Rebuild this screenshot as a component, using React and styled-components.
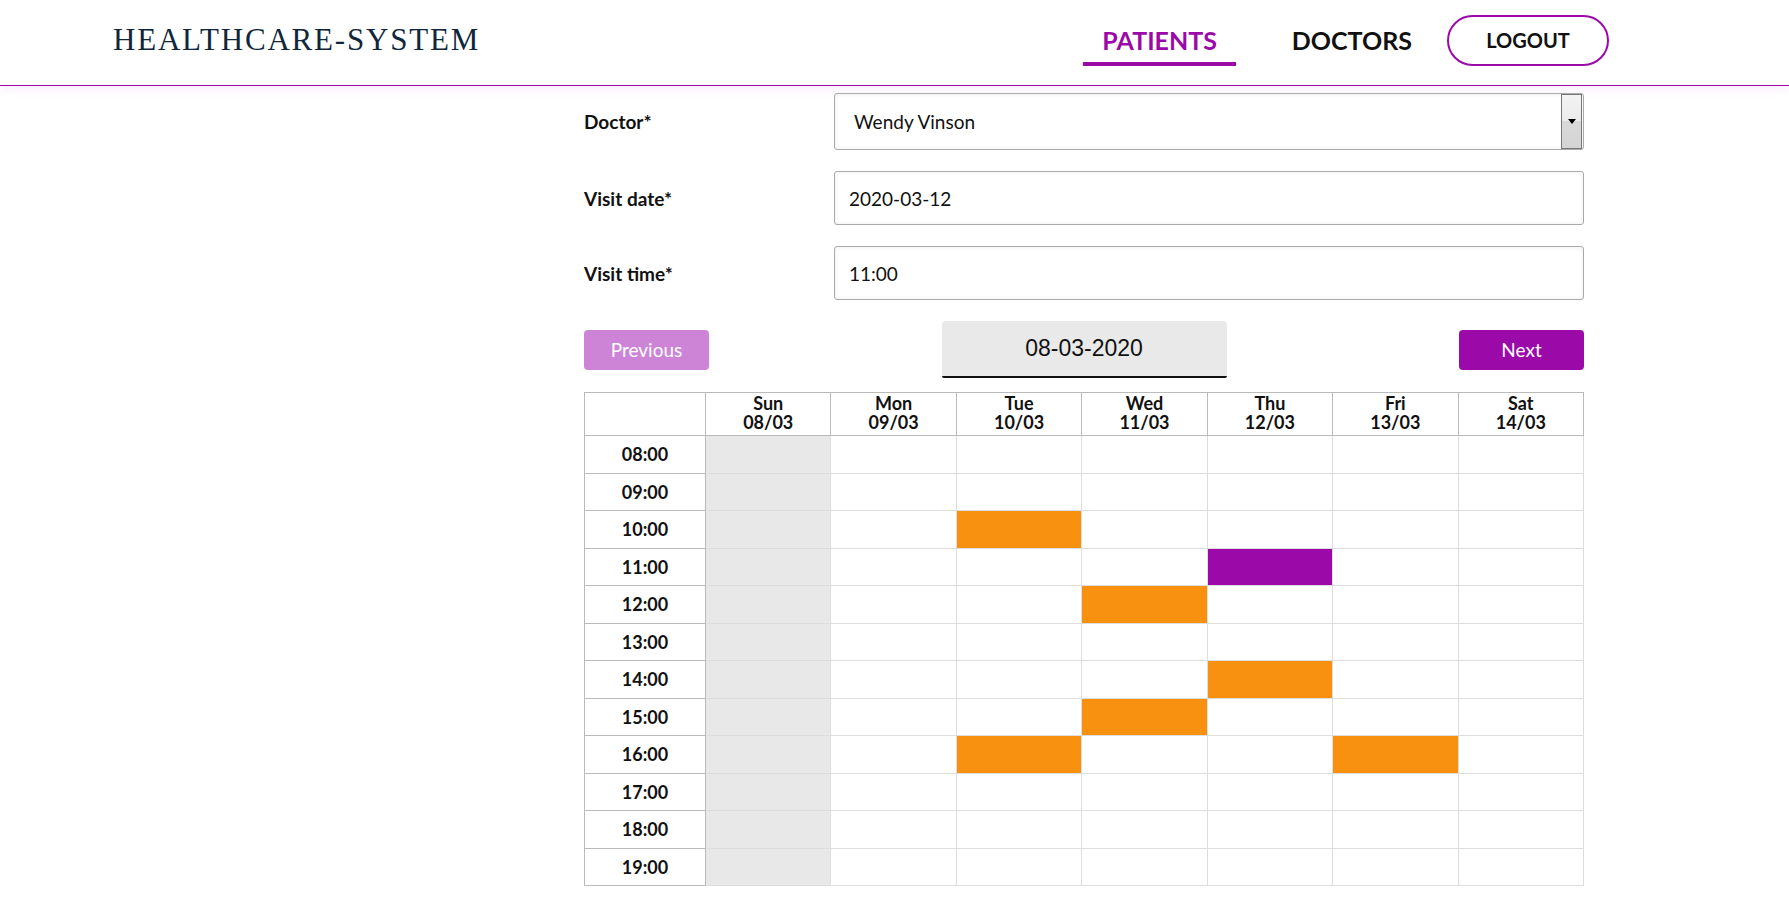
import React from 'react';
import styled, { createGlobalStyle } from 'styled-components';

const PURPLE = '#9b09a8';
const ORANGE = '#f8910f';

const GlobalStyle = createGlobalStyle`
  body {
    margin: 0;
    background: #fff;
    font-family: Lato, "Open Sans", sans-serif;
    color: #111;
  }
`;

const Header = styled.header`
  height: 86px;
  box-sizing: border-box;
  display: flex;
  align-items: center;
  justify-content: space-between;
  padding: 0 180px 5px 113px;
  border-bottom: 1px solid ${PURPLE};
  box-shadow: 0 3px 10px rgba(155, 9, 168, 0.08);
`;

const Logo = styled.div`
  font-family: "Liberation Serif", "DejaVu Serif", serif;
  font-size: 31px;
  letter-spacing: 1.8px;
  color: #10263a;
`;

const Nav = styled.nav`
  display: flex;
  align-items: center;
`;

const NavLinks = styled.div`
  display: flex;
  gap: 37px;
  align-items: center;
`;

const NavLink = styled.a`
  font-size: 25px;
  font-weight: 700;
  line-height: 28px;
  padding: 12px 19px 8px;
  color: ${p => (p.$active ? PURPLE : '#111')};
  border-bottom: 4px solid ${p => (p.$active ? PURPLE : 'transparent')};
  cursor: pointer;
`;

const LogoutButton = styled.button`
  margin-left: 16px;
  width: 162px;
  height: 51px;
  border: 2px solid ${PURPLE};
  border-radius: 26px;
  background: #fff;
  font-family: Lato, sans-serif;
  font-size: 20px;
  font-weight: 700;
  color: #111;
  padding: 0;
`;

const Content = styled.main`
  width: 1000px;
  margin: 7px 0 0 584px;
`;

const FormRow = styled.div`
  display: grid;
  grid-template-columns: 250px 1fr;
  align-items: center;
  margin-bottom: 21px;
`;

const Label = styled.label`
  font-size: 19px;
  font-weight: 700;
`;

const Input = styled.div`
  height: 54px;
  box-sizing: border-box;
  border: 1px solid #aaa;
  border-radius: 3px;
  box-shadow: inset 0 0 5px rgba(0, 0, 0, 0.07);
  display: flex;
  align-items: center;
  padding-left: 14px;
  font-size: 19px;
`;

const Select = styled(Input)`
  height: 57px;
  padding-left: 19px;
  padding-right: 1px;
  justify-content: space-between;
`;

const SelectArrow = styled.div`
  width: 21px;
  height: 55px;
  box-sizing: border-box;
  border: 1px solid #777;
  background: linear-gradient(#f3f3f3 0%, #ebebeb 50%, #d9d9d9 50%, #d4d4d4 100%);
  display: flex;
  align-items: center;
  justify-content: center;
  &::after {
    content: '';
    border-left: 4px solid transparent;
    border-right: 4px solid transparent;
    border-top: 5px solid #000;
  }
`;

const WeekBar = styled.div`
  display: flex;
  align-items: center;
  justify-content: space-between;
`;

const PageButton = styled.button`
  width: 125px;
  height: 40px;
  border: none;
  border-radius: 4px;
  background: ${p => (p.$disabled ? '#ce84d6' : PURPLE)};
  color: #fff;
  font-family: Lato, sans-serif;
  font-size: 19px;
  padding: 0;
`;

const DateBox = styled.div`
  width: 285px;
  height: 57px;
  box-sizing: border-box;
  background: #e9e9e9;
  border-bottom: 2px solid #111;
  border-radius: 4px 4px 2px 2px;
  display: flex;
  align-items: center;
  justify-content: center;
  font-family: "Liberation Sans", Arial, sans-serif;
  font-size: 23px;
  color: #111;
`;

const Table = styled.table`
  margin-top: 14px;
  width: 1000px;
  border-collapse: collapse;
  table-layout: fixed;
  border: 1px solid #bbb;
`;

const HeadCell = styled.th`
  height: 40px;
  border: 1px solid #bbb;
  font-size: 18px;
  font-weight: 700;
  line-height: 19px;
  padding: 0 0 2px;
  vertical-align: middle;
`;

const TimeCell = styled.td`
  height: 37.5px;
  box-sizing: border-box;
  border: 1px solid #bbb;
  font-size: 18px;
  font-weight: 700;
  text-align: center;
  padding: 0;
`;

const SlotCell = styled.td`
  border: 1px solid #ddd;
  padding: 0;
  background: ${p => p.$color};
`;

const days = [
  ['Sun', '08/03'],
  ['Mon', '09/03'],
  ['Tue', '10/03'],
  ['Wed', '11/03'],
  ['Thu', '12/03'],
  ['Fri', '13/03'],
  ['Sat', '14/03'],
];

const hours = ['08:00', '09:00', '10:00', '11:00', '12:00', '13:00', '14:00', '15:00', '16:00', '17:00', '18:00', '19:00'];

// taken visits by "day-hour", selected one in purple
const taken = {
  '2-10:00': ORANGE,
  '4-11:00': PURPLE,
  '3-12:00': ORANGE,
  '4-14:00': ORANGE,
  '3-15:00': ORANGE,
  '2-16:00': ORANGE,
  '5-16:00': ORANGE,
};

function cellColor(day, hour) {
  if (taken[`${day}-${hour}`]) return taken[`${day}-${hour}`];
  if (day === 0) return '#e8e8e8';
  return '#fff';
}

export default function App() {
  return (
    <>
      <GlobalStyle />
      <Header>
        <Logo>HEALTHCARE-SYSTEM</Logo>
        <Nav>
          <NavLinks>
            <NavLink $active>PATIENTS</NavLink>
            <NavLink>DOCTORS</NavLink>
          </NavLinks>
          <LogoutButton>LOGOUT</LogoutButton>
        </Nav>
      </Header>
      <Content>
        <FormRow>
          <Label>Doctor*</Label>
          <Select>
            <span>Wendy Vinson</span>
            <SelectArrow />
          </Select>
        </FormRow>
        <FormRow>
          <Label>Visit date*</Label>
          <Input>2020-03-12</Input>
        </FormRow>
        <FormRow>
          <Label>Visit time*</Label>
          <Input>11:00</Input>
        </FormRow>
        <WeekBar>
          <PageButton $disabled>Previous</PageButton>
          <DateBox>08-03-2020</DateBox>
          <PageButton>Next</PageButton>
        </WeekBar>
        <Table>
          <colgroup>
            <col width="121" />
            {days.map(d => (
              <col key={d[0]} />
            ))}
          </colgroup>
          <thead>
            <tr>
              <HeadCell />
              {days.map(([name, date]) => (
                <HeadCell key={name}>
                  {name}
                  <br />
                  {date}
                </HeadCell>
              ))}
            </tr>
          </thead>
          <tbody>
            {hours.map(h => (
              <tr key={h}>
                <TimeCell>{h}</TimeCell>
                {days.map((d, i) => (
                  <SlotCell key={d[0]} $color={cellColor(i, h)} />
                ))}
              </tr>
            ))}
          </tbody>
        </Table>
      </Content>
    </>
  );
}
